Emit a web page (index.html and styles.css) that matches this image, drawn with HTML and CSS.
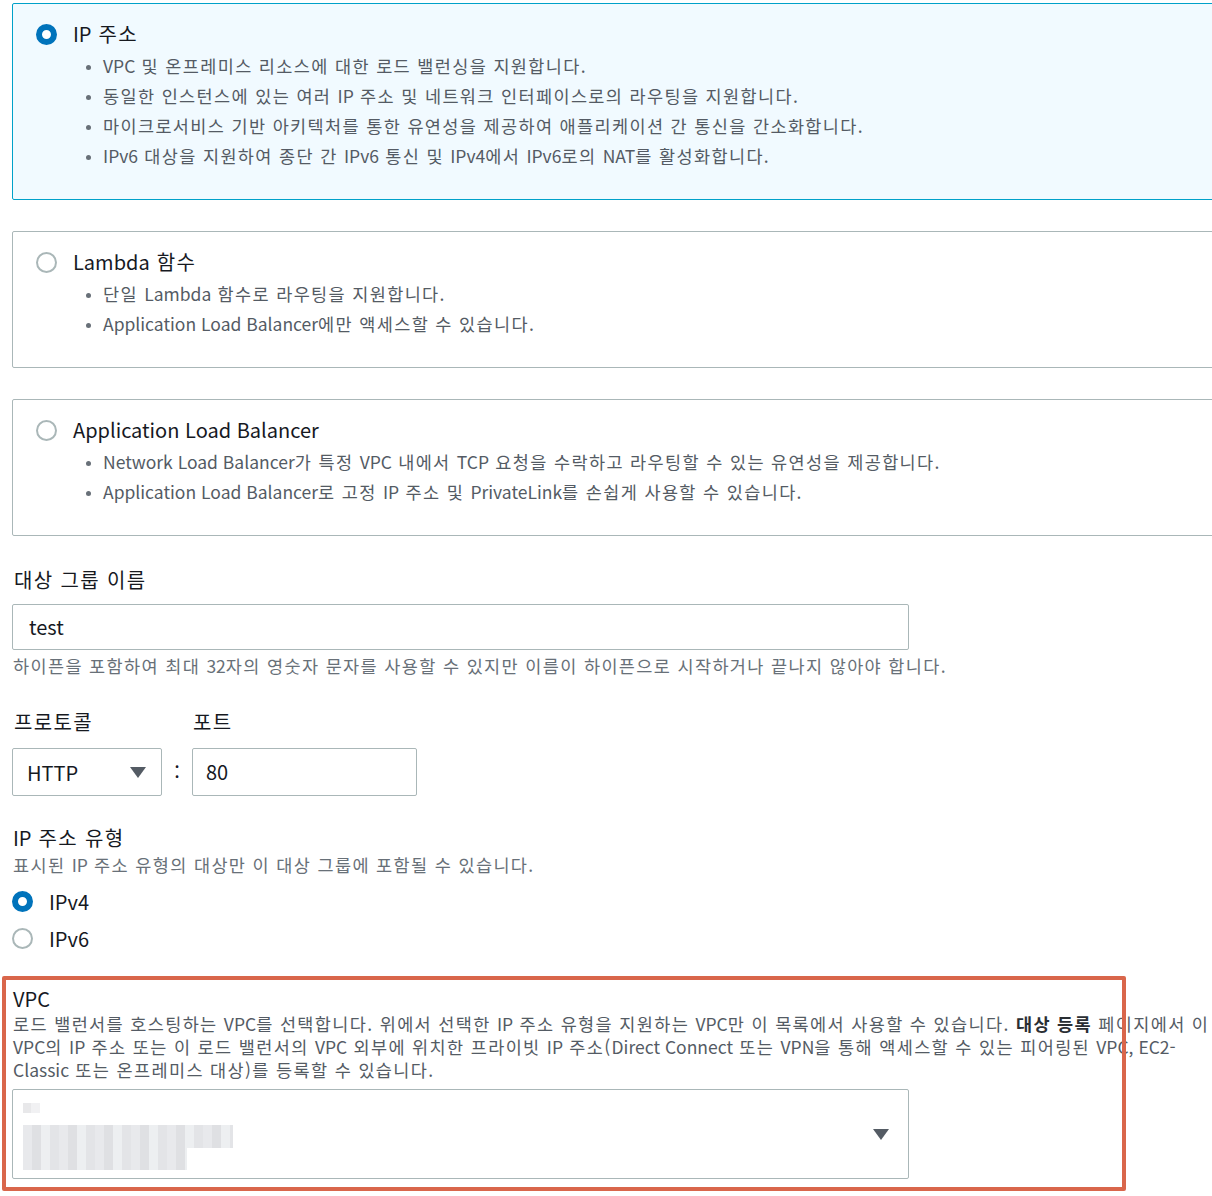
FILE: index.html
```html
<!DOCTYPE html>
<html lang="ko">
<head>
<meta charset="utf-8">
<title>대상 그룹</title>
<link rel="stylesheet" href="styles.css">
</head>
<body>
<div class="page">
  <div class="cards">
    <div class="card card-selected">
      <div class="card-title"><span class="radio radio-on"></span><span><span class="en">IP</span> 주소</span></div>
      <ul class="bullets">
        <li><span class="en">VPC</span> 및 온프레미스 리소스에 대한 로드 밸런싱을 지원합니다.</li>
        <li>동일한 인스턴스에 있는 여러 <span class="en">IP</span> 주소 및 네트워크 인터페이스로의 라우팅을 지원합니다.</li>
        <li>마이크로서비스 기반 아키텍처를 통한 유연성을 제공하여 애플리케이션 간 통신을 간소화합니다.</li>
        <li><span class="en">IPv6</span> 대상을 지원하여 종단 간 <span class="en">IPv6</span> 통신 및 <span class="en">IPv4</span>에서 <span class="en">IPv6</span>로의 <span class="en">NAT</span>를 활성화합니다.</li>
      </ul>
    </div>
    <div class="card">
      <div class="card-title"><span class="radio"></span><span><span class="en">Lambda</span> 함수</span></div>
      <ul class="bullets">
        <li>단일 <span class="en">Lambda</span> 함수로 라우팅을 지원합니다.</li>
        <li><span class="en">Application Load Balancer</span>에만 액세스할 수 있습니다.</li>
      </ul>
    </div>
    <div class="card">
      <div class="card-title"><span class="radio"></span><span class="en">Application Load Balancer</span></div>
      <ul class="bullets">
        <li><span class="en">Network Load Balancer</span>가 특정 <span class="en">VPC</span> 내에서 <span class="en">TCP</span> 요청을 수락하고 라우팅할 수 있는 유연성을 제공합니다.</li>
        <li><span class="en">Application Load Balancer</span>로 고정 <span class="en">IP</span> 주소 및 <span class="en">PrivateLink</span>를 손쉽게 사용할 수 있습니다.</li>
      </ul>
    </div>
  </div>

  <div class="field field-name">
    <div class="label">대상 그룹 이름</div>
    <div class="input input-wide">test</div>
    <div class="hint">하이픈을 포함하여 최대 <span class="en">32</span>자의 영숫자 문자를 사용할 수 있지만 이름이 하이픈으로 시작하거나 끝나지 않아야 합니다.</div>
  </div>

  <div class="field field-proto">
    <div class="proto-row">
      <div class="proto-col">
        <div class="label">프로토콜</div>
        <div class="select select-proto"><span>HTTP</span><span class="caret"></span></div>
      </div>
      <div class="colon">:</div>
      <div class="proto-col">
        <div class="label label-port">포트</div>
        <div class="input input-port">80</div>
      </div>
    </div>
  </div>

  <div class="field field-ip">
    <div class="label label-tight"><span class="en">IP</span> 주소 유형</div>
    <div class="desc">표시된 <span class="en">IP</span> 주소 유형의 대상만 이 대상 그룹에 포함될 수 있습니다.</div>
    <div class="opt"><span class="radio radio-on"></span><span>IPv4</span></div>
    <div class="opt"><span class="radio"></span><span>IPv6</span></div>
  </div>

  <div class="field field-vpc">
    <div class="label label-vpc en">VPC</div>
    <div class="vpc-desc">
      <span class="line">로드 밸런서를 호스팅하는 <span class="en">VPC</span>를 선택합니다. 위에서 선택한 <span class="en">IP</span> 주소 유형을 지원하는 <span class="en">VPC</span>만 이 목록에서 사용할 수 있습니다. <b>대상 등록</b> 페이지에서 이</span>
      <span class="line"><span class="en">VPC</span>의 <span class="en">IP</span> 주소 또는 이 로드 밸런서의 <span class="en">VPC</span> 외부에 위치한 프라이빗 <span class="en">IP</span> 주소(<span class="en">Direct Connect</span> 또는 <span class="en">VPN</span>을 통해 액세스할 수 있는 피어링된 <span class="en">VPC, EC2-</span></span>
      <span class="line"><span class="en">Classic</span> 또는 온프레미스 대상)를 등록할 수 있습니다.</span>
    </div>
    <div class="select select-vpc">
      <div class="blur">
        <div class="blur-small"></div>
        <div class="blur-big"></div>
      </div>
      <span class="caret"></span>
    </div>
    <div class="highlight"></div>
  </div>
</div>
</body>
</html>
```
FILE: styles.css
```css
html, body {
  margin: 0;
  padding: 0;
  background: #ffffff;
  overflow: hidden;
}
body {
  font-family: "Noto Sans CJK KR", "Noto Sans", sans-serif;
  color: #16191f;
}
.page {
  width: 1260px;
  padding: 3px 0 0 12px;
  letter-spacing: 0.085em;
}
.en {
  letter-spacing: 0;
}
.cards {
  display: flex;
  flex-direction: column;
  gap: 31px;
}
.card {
  border: 1px solid #aab7b8;
  border-radius: 2px;
  padding: 14px 0 28px 23px;
  background: #ffffff;
}
.card-selected {
  background: #f1faff;
  border-color: #00a1c9;
}
.card-title {
  display: flex;
  align-items: center;
  gap: 16px;
  height: 32px;
  font-size: 20px;
  line-height: 32px;
  color: #16191f;
}
.radio {
  box-sizing: border-box;
  width: 21px;
  height: 21px;
  border-radius: 50%;
  border: 2px solid #aab7b8;
  background: #ffffff;
  flex: none;
}
.radio-on {
  border: 6px solid #0073bb;
}
.bullets {
  margin: 1px 0 0 0;
  padding: 0 0 0 67px;
  list-style: none;
}
.bullets li {
  position: relative;
  font-size: 17.5px;
  line-height: 30px;
  color: #545b64;
  white-space: nowrap;
}
.bullets li::before {
  content: "";
  position: absolute;
  left: -17px;
  top: 14px;
  width: 5px;
  height: 5px;
  border-radius: 50%;
  background: #687078;
}
.label {
  font-size: 20px;
  line-height: 28px;
  padding-left: 2px;
  color: #16191f;
}
.label-port {
  padding-left: 1px;
}
.field-name {
  margin-top: 30px;
}
.input, .select {
  box-sizing: border-box;
  border: 1px solid #aab7b8;
  border-radius: 2px;
  background: #fff;
  font-size: 20px;
  color: #16191f;
  letter-spacing: 0;
}
.input-wide {
  width: 897px;
  height: 46px;
  line-height: 44px;
  padding-left: 16px;
  margin-top: 10px;
}
.hint {
  margin-top: 4px;
  font-size: 17.5px;
  line-height: 24px;
  color: #687078;
  padding-left: 1px;
  white-space: nowrap;
}
.field-proto {
  margin-top: 30px;
}
.proto-row {
  display: flex;
  align-items: flex-end;
}
.proto-col .label {
  margin-bottom: 12px;
}
.select-proto {
  width: 150px;
  height: 48px;
  display: flex;
  align-items: center;
  justify-content: space-between;
  padding: 0 15px 0 14px;
}
.caret {
  width: 0;
  height: 0;
  border-left: 8px solid transparent;
  border-right: 8px solid transparent;
  border-top: 11px solid #545b64;
}
.colon {
  width: 30px;
  height: 48px;
  line-height: 48px;
  text-align: center;
  font-size: 20px;
  color: #16191f;
  letter-spacing: 0;
}
.input-port {
  width: 225px;
  height: 48px;
  line-height: 46px;
  padding-left: 13px;
}
.field-ip {
  margin-top: 29px;
}
.label-tight {
  line-height: 26px;
  padding-left: 1px;
}
.desc {
  margin-top: 2px;
  font-size: 17.5px;
  line-height: 24px;
  color: #687078;
  padding-left: 1px;
}
.field-ip .desc {
  margin-bottom: 6px;
}
.opt {
  display: flex;
  align-items: center;
  gap: 16px;
  height: 37px;
  font-size: 20px;
  color: #16191f;
  letter-spacing: 0;
}
.field-vpc {
  position: relative;
  margin-top: 30px;
  padding-bottom: 12px;
}
.label-vpc {
  line-height: 24px;
  padding-left: 1px;
}
.vpc-desc {
  margin-top: 1px;
  font-size: 17.5px;
  line-height: 23px;
  color: #545b64;
  padding-left: 1px;
}
.vpc-desc .line {
  display: block;
  white-space: nowrap;
}
.vpc-desc b {
  color: #2a2e33;
  font-weight: 700;
}
.select-vpc {
  margin-top: 8px;
  width: 897px;
  height: 90px;
  display: flex;
  align-items: center;
  justify-content: space-between;
  padding: 0 19px 0 10px;
}
.blur {
  display: flex;
  flex-direction: column;
  gap: 12px;
  margin-top: 4px;
}
.blur-small {
  width: 17px;
  height: 10px;
  background: linear-gradient(90deg, #e8e8ea 0 50%, #f1f1f3 50% 100%);
}
.blur-big {
  width: 210px;
  height: 45px;
  background:
    linear-gradient(90deg, rgba(255,255,255,0) 0 78%, #ffffff 78% 100%) 0 23px / 100% 22px no-repeat,
    repeating-linear-gradient(90deg, #e6e7ea 0 9px, #dcdde1 9px 18px, #eceef0 18px 27px, #e1e2e5 27px 36px),
    #e6e7ea;
  opacity: 0.9;
}
.highlight {
  position: absolute;
  left: -10px;
  top: -11px;
  width: 1124px;
  height: 215px;
  box-sizing: border-box;
  border: 4px solid #d9664b;
  border-radius: 2px;
  pointer-events: none;
}
```
